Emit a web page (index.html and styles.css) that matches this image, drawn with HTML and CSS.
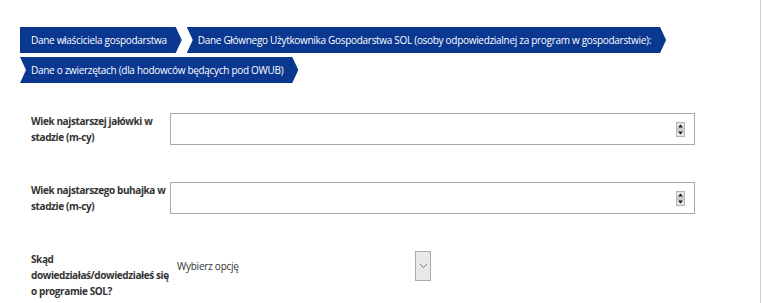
FILE: index.html
```html
<!DOCTYPE html>
<html lang="pl">
<head>
<meta charset="utf-8">
<title>Formularz SOL</title>
<link rel="stylesheet" href="styles.css">
</head>
<body>
<div class="page">
  <nav class="tabs">
    <div class="tab tab-first">Dane właściciela gospodarstwa</div>
    <div class="tab">Dane Głównego Użytkownika Gospodarstwa SOL (osoby odpowiedzialnej za program w gospodarstwie):</div>
    <div class="tab">Dane o zwierzętach (dla hodowców będących pod OWUB)</div>
  </nav>
  <form class="form">
    <div class="row">
      <label class="label">Wiek najstarszej jałówki w stadzie (m-cy)</label>
      <div class="num">
        <input class="num-input" type="text">
        <svg class="spin" width="9" height="15" viewBox="0 0 9 15">
          <rect x="0.5" y="0.5" width="8" height="6.5" fill="#e6e6e6" stroke="#b4b4b4"/>
          <rect x="0.5" y="8" width="8" height="6.5" fill="#e6e6e6" stroke="#b4b4b4"/>
          <path d="M2 5.5 L4.5 2.5 L7 5.5 Z" fill="#111"/>
          <path d="M2 9.5 L7 9.5 L4.5 12.5 Z" fill="#111"/>
        </svg>
      </div>
    </div>
    <div class="row">
      <label class="label">Wiek najstarszego buhajka w stadzie (m-cy)</label>
      <div class="num">
        <input class="num-input" type="text">
        <svg class="spin" width="9" height="15" viewBox="0 0 9 15">
          <rect x="0.5" y="0.5" width="8" height="6.5" fill="#e6e6e6" stroke="#b4b4b4"/>
          <rect x="0.5" y="8" width="8" height="6.5" fill="#e6e6e6" stroke="#b4b4b4"/>
          <path d="M2 5.5 L4.5 2.5 L7 5.5 Z" fill="#111"/>
          <path d="M2 9.5 L7 9.5 L4.5 12.5 Z" fill="#111"/>
        </svg>
      </div>
    </div>
    <div class="row">
      <label class="label">Skąd dowiedziałaś/dowiedziałeś się o programie SOL?</label>
      <div class="select">
        <span class="select-text">Wybierz opcję</span>
        <span class="select-btn">
          <svg width="9" height="6" viewBox="0 0 9 6"><path d="M1 1 L4.5 4.5 L8 1" fill="none" stroke="#777" stroke-width="1"/></svg>
        </span>
      </div>
    </div>
  </form>
</div>
</body>
</html>
```
FILE: styles.css
```css
html, body {
  margin: 0;
  padding: 0;
  background: #fff;
}
.page {
  box-sizing: border-box;
  width: 761px;
  min-height: 303px;
  border-right: 1px solid #cfcfcf;
  font-family: "Open Sans", "Liberation Sans", sans-serif;
  color: #333;
}
.tabs {
  display: flex;
  flex-wrap: wrap;
  column-gap: 5px;
  row-gap: 4px;
  padding: 27px 0 0 20px;
  width: 690px;
}
.tab {
  height: 26px;
  line-height: 26px;
  background: #0a3891;
  color: #fff;
  font-size: 10px;
  letter-spacing: -0.3px;
  padding: 0 15px 0 11px;
  white-space: nowrap;
  clip-path: polygon(0 0, calc(100% - 6px) 0, 100% 50%, calc(100% - 6px) 100%, 0 100%, 6px 50%);
}
.tab-first {
  clip-path: polygon(0 0, calc(100% - 6px) 0, 100% 50%, calc(100% - 6px) 100%, 0 100%);
}
.form {
  display: flex;
  flex-direction: column;
  gap: 37px;
  padding: 30px 0 0 31px;
}
.row {
  display: flex;
  align-items: flex-start;
}
.label {
  width: 139px;
  font-size: 10px;
  font-weight: 700;
  letter-spacing: -0.4px;
  line-height: 16px;
  color: #333;
}
.num {
  box-sizing: border-box;
  width: 525px;
  height: 32px;
  border: 1px solid #a9a9a9;
  display: flex;
  align-items: center;
  padding-right: 9px;
}
.num-input {
  flex: 1;
  border: 0;
  outline: 0;
  height: 100%;
  background: transparent;
  padding: 0 6px;
  font: inherit;
}
.spin {
  display: block;
}
.select {
  width: 261px;
  height: 30px;
  display: flex;
  align-items: center;
  justify-content: space-between;
}
.select-text {
  font-size: 10px;
  letter-spacing: -0.25px;
  color: #333;
  padding-left: 7px;
}
.select-btn {
  box-sizing: border-box;
  width: 16px;
  height: 30px;
  border: 1px solid #ababab;
  background: #e9e9e9;
  display: flex;
  align-items: center;
  justify-content: center;
}
.select-btn svg {
  display: block;
}
```
